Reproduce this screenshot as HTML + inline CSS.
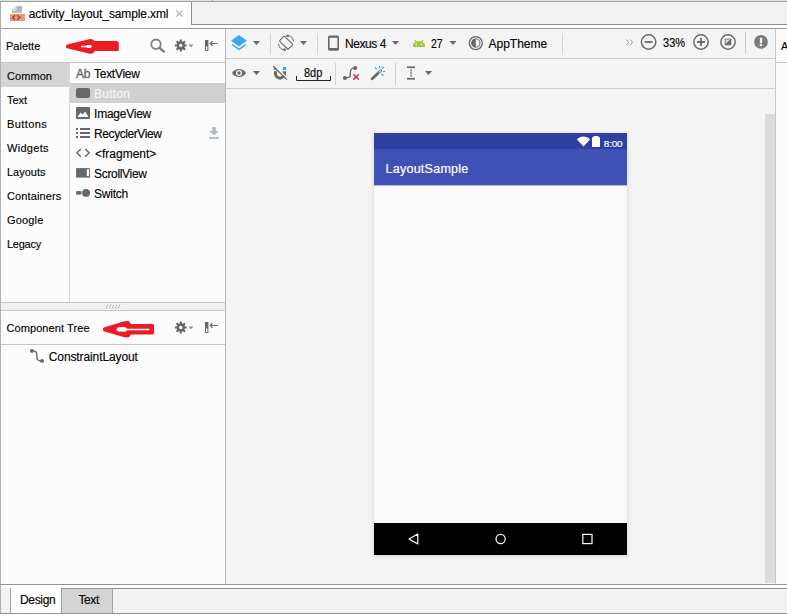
<!DOCTYPE html>
<html><head><meta charset="utf-8">
<style>
*{margin:0;padding:0;box-sizing:border-box}
html,body{width:787px;height:616px;overflow:hidden;background:#fff}
body{position:relative;font-family:"Liberation Sans",sans-serif;color:#111;font-size:12px}
.a{position:absolute}
.t{position:absolute;white-space:nowrap;line-height:1;color:#000;-webkit-text-stroke:0.13px #000}
.it{font-size:12px}
.hd{font-size:11px}
svg{position:absolute;overflow:visible}
</style></head><body>
<!-- ===== top tab strip ===== -->
<div class="a" style="left:0;top:0;width:787px;height:1px;background:#e2e2e2"></div><div class="a" style="left:0;top:1px;width:787px;height:1px;background:#9c9c9c"></div><div class="a" style="left:212px;top:0;width:1px;height:1px;background:#9c9c9c"></div>
<div class="a" style="left:191px;top:2px;width:596px;height:22px;background:#f2f2f2"></div>
<div class="a" style="left:191px;top:24px;width:596px;height:1px;background:#8e8e8e"></div>
<div class="a" style="left:191px;top:2px;width:1px;height:23px;background:#8e8e8e"></div>
<div class="a" style="left:0;top:28px;width:787px;height:1px;background:#9c9c9c"></div>
<div class="a" style="left:0;top:2px;width:1px;height:612px;background:#b0b0b0"></div>
<!-- file icon -->
<svg style="left:10px;top:6px" width="15" height="15" viewBox="0 0 15 15">
<path d="M6.4 0 H12 V6.8 H2 V4.4 H6.4 Z" fill="#b3b8bd"/>
<path d="M2 3.8 L5.8 0 V3.8 Z" fill="#ccd0d4"/>
<rect x="0" y="8" width="15" height="7" fill="#f0956d"/>
<path d="M5 9.3 L2.6 11.5 L5 13.7 M7.4 9.3 L9.8 11.5 L7.4 13.7" stroke="#7a4a36" stroke-width="1.2" fill="none"/>
</svg>
<div class="t it" id="t_tab" style="left:28.7px;top:8px;letter-spacing:-0.115px">activity_layout_sample.xml</div>
<svg style="left:176px;top:10.4px" width="7" height="7" viewBox="0 0 7 7"><path d="M0.3 0.3 L6.7 6.7 M6.7 0.3 L0.3 6.7" stroke="#b2b2b2" stroke-width="1.2" fill="none"/></svg>

<!-- ===== left panel ===== -->
<div class="a" style="left:1px;top:29px;width:224px;height:555px;background:#fcfcfc"></div>
<div class="a" style="left:225px;top:29px;width:1px;height:556px;background:#b8b8b8"></div>
<div class="t hd" id="t_pal" style="left:6px;top:40.5px">Palette</div>
<div class="a" style="left:1px;top:62px;width:224px;height:1px;background:#c8c8c8"></div>
<!-- red arrow 1 -->
<svg style="left:0;top:0" width="230" height="350" viewBox="0 0 230 350">
<path d="M65.8 46.5 C65.8 44.8 67.5 44.4 70 43.8 L86 39.9 L90 39 L92.2 39.2 L94.6 41 L116.8 41 L118.8 42.6 L118.8 50.9 L95 50.9 L92.6 53.4 L90 53.7 L86 52.8 L70 49 C67.5 48.4 65.8 48.2 65.8 46.5 Z" fill="#ed1c24"/>
<path d="M81 45.7 L86 45.7 L87 44.9 L91 44.9 L91.8 46.4 L91 48 L87 48 L86 47.2 L81 47.2 Z" fill="#fff"/>
<path d="M102.8 329.4 C102.8 327.6 104.6 327.2 107 326.5 L123.5 321.6 L127 320.9 L129 321.2 L131 324 L153 324 L154 325 L154 333.5 L153 334.5 L131 334.5 L129 337.3 L127 337.6 L123.5 336.9 L107 332.2 C104.6 331.5 102.8 331.2 102.8 329.4 Z" fill="#ed1c24"/>
<path d="M116.2 329.4 L118 327.3 L125 327.1 L127.2 328.7 L149.2 328.7 L149.2 330.3 L127.2 330.3 L125 331.7 L118 331.5 Z" fill="#fff"/>
</svg>
<!-- header icons: search, gear, hide -->
<svg style="left:150px;top:38px" width="16" height="16" viewBox="0 0 16 16"><circle cx="6" cy="6.2" r="4.7" stroke="#7e7e7e" stroke-width="1.8" fill="none"/><path d="M9.6 9.8 L13.8 13.7" stroke="#7e7e7e" stroke-width="2.4" stroke-linecap="round"/></svg>
<svg class="gear" style="left:174px;top:38.5px" width="22" height="13" viewBox="0 0 22 13">
<g fill="#676767"><circle cx="6.8" cy="6.5" r="4.2"/>
<g stroke="#676767" stroke-width="2.1"><path d="M6.8 0.6 V12.4 M0.9 6.5 H12.7 M2.6 2.3 L11 10.7 M11 2.3 L2.6 10.7"/></g>
<circle cx="6.8" cy="6.5" r="1.7" fill="#fcfcfc"/>
<path d="M14.6 5.6 L19.4 5.6 L17 8.2 Z" fill="#8a8a8a"/></g></svg>
<svg style="left:204.5px;top:40px" width="14" height="11" viewBox="0 0 14 11"><rect x="0.5" y="0.5" width="2.4" height="10" fill="#fcfcfc" stroke="#676767" stroke-width="1"/><rect x="0.5" y="0.5" width="2.4" height="6" fill="#676767"/><path d="M5.2 3.5 H12.6 M7.6 1.2 L5.2 3.5 L7.6 5.8" stroke="#676767" stroke-width="1.1" fill="none"/></svg>

<!-- categories -->
<div class="a" style="left:1px;top:63px;width:68px;height:24px;background:#d4d4d4"></div>
<div class="a" style="left:69px;top:63px;width:1px;height:240px;background:#d9d9d9"></div>
<div class="t hd cat" style="left:7px;top:71px;letter-spacing:0.06px">Common</div>
<div class="t hd cat" style="left:7px;top:95px">Text</div>
<div class="t hd cat" style="left:7px;top:119px;letter-spacing:0.4px">Buttons</div>
<div class="t hd cat" style="left:7px;top:143px;letter-spacing:0.3px">Widgets</div>
<div class="t hd cat" style="left:7px;top:167px">Layouts</div>
<div class="t hd cat" style="left:7px;top:191px;letter-spacing:0.13px">Containers</div>
<div class="t hd cat" style="left:7px;top:215px;letter-spacing:0.17px">Google</div>
<div class="t hd cat" style="left:7px;top:239px;letter-spacing:-0.25px">Legacy</div>

<!-- items -->
<div class="a" style="left:70px;top:83px;width:155px;height:20px;background:#d0d0d0"></div>
<div class="t it pi" style="left:94.1px;top:68px;letter-spacing:-0.3px">TextView</div>
<div class="t it pi" style="left:94.1px;top:88px;color:#f6f6f6;-webkit-text-stroke:0.2px #f6f6f6;letter-spacing:0.25px">Button</div>
<div class="t it pi" style="left:94.1px;top:108px;letter-spacing:-0.25px">ImageView</div>
<div class="t it pi" style="left:94.1px;top:128px;letter-spacing:-0.43px">RecyclerView</div>
<div class="t it pi" style="left:95px;top:148px">&lt;fragment&gt;</div>
<div class="t it pi" style="left:94.1px;top:168px;letter-spacing:-0.33px">ScrollView</div>
<div class="t it pi" style="left:94.1px;top:188px;letter-spacing:-0.23px">Switch</div>
<!-- item icons -->
<div class="t" style="left:76px;top:67.8px;font-size:12px;color:#676767;-webkit-text-stroke:0.35px #676767;letter-spacing:-0.3px">Ab</div>
<div class="a" style="left:76px;top:88px;width:14px;height:10px;border-radius:2px;background:#676767"></div>
<svg style="left:76px;top:107px" width="14" height="12" viewBox="0 0 14 12"><rect width="14" height="12" rx="1.2" fill="#676767"/><path d="M1.5 10 L4.6 5.6 L6.6 7.6 L9.2 4.4 L12.5 10 Z" fill="#fcfcfc"/></svg>
<svg style="left:76px;top:128px" width="14" height="10" viewBox="0 0 14 10"><g fill="#676767"><rect x="0" y="0" width="2" height="2"/><rect x="0" y="4" width="2" height="2"/><rect x="0" y="8" width="2" height="2"/><rect x="4" y="0" width="10" height="2"/><rect x="4" y="4" width="10" height="2"/><rect x="4" y="8" width="10" height="2"/></g></svg>
<svg style="left:76px;top:148px" width="14" height="10" viewBox="0 0 14 10"><path d="M4.9 0.9 L0.8 4.8 L4.9 8.7 M9.1 0.9 L13.2 4.8 L9.1 8.7" stroke="#676767" stroke-width="1.4" fill="none"/></svg>
<svg style="left:76px;top:168px" width="14" height="10" viewBox="0 0 14 10"><rect x="0.1" y="0.1" width="13.8" height="9.5" fill="#676767"/><rect x="10.8" y="1.3" width="2.2" height="6.8" fill="#fcfcfc"/></svg>
<svg style="left:76px;top:188px" width="14" height="10" viewBox="0 0 14 10"><rect x="0.1" y="3.1" width="5.1" height="3.6" rx="1.2" fill="#676767"/><rect x="5" y="3.4" width="1.6" height="3" fill="#b4b4b4"/><circle cx="10.1" cy="4.9" r="3.9" fill="#676767"/></svg>
<!-- download -->
<svg style="left:209px;top:127px" width="10" height="12" viewBox="0 0 10 12"><path d="M3.2 0 H6.8 V4 H10 L5 8.6 L0 4 H3.2 Z" fill="#b2bac2"/><rect x="0" y="10" width="10" height="1.8" fill="#b2bac2"/></svg>

<!-- splitter -->
<div class="a" style="left:1px;top:302px;width:224px;height:1px;background:#c8c8c8"></div>
<div class="a" style="left:1px;top:303px;width:224px;height:7px;background:#f0f0f0"></div>
<div class="a" style="left:1px;top:310px;width:224px;height:1px;background:#c8c8c8"></div>
<svg style="left:105px;top:304px" width="16" height="5" viewBox="0 0 16 5"><path d="M1 4.5 L3 0.5 M4 4.5 L6 0.5 M7 4.5 L9 0.5 M10 4.5 L12 0.5 M13 4.5 L15 0.5" stroke="#b0b0b0" stroke-width="0.9"/></svg>
<!-- component tree -->
<div class="t hd" id="t_ct" style="left:6.4px;top:322.5px;letter-spacing:0.1px">Component Tree</div>
<div class="a" style="left:1px;top:344px;width:224px;height:1px;background:#c8c8c8"></div>
<svg class="gear" style="left:174px;top:321px" width="22" height="13" viewBox="0 0 22 13">
<g fill="#676767"><circle cx="6.8" cy="6.5" r="4.2"/>
<g stroke="#676767" stroke-width="2.1"><path d="M6.8 0.6 V12.4 M0.9 6.5 H12.7 M2.6 2.3 L11 10.7 M11 2.3 L2.6 10.7"/></g>
<circle cx="6.8" cy="6.5" r="1.7" fill="#fcfcfc"/>
<path d="M14.6 5.6 L19.4 5.6 L17 8.2 Z" fill="#8a8a8a"/></g></svg>
<svg style="left:204.5px;top:322px" width="14" height="11" viewBox="0 0 14 11"><rect x="0.5" y="0.5" width="2.4" height="10" fill="#fcfcfc" stroke="#676767" stroke-width="1"/><rect x="0.5" y="0.5" width="2.4" height="6" fill="#676767"/><path d="M5.2 3.5 H12.6 M7.6 1.2 L5.2 3.5 L7.6 5.8" stroke="#676767" stroke-width="1.1" fill="none"/></svg>
<svg style="left:0px;top:0px" width="60" height="370" viewBox="0 0 60 370"><path d="M31.85 350.9 C36.4 350.9 36.9 352.2 36.9 356 C36.9 359.8 37.4 360.9 42.05 360.9" stroke="#676767" stroke-width="1.4" fill="none"/><circle cx="31.85" cy="350.9" r="1.95" fill="#676767"/><circle cx="42.05" cy="360.9" r="1.95" fill="#676767"/></svg>
<div class="t it" id="t_cl" style="left:48.8px;top:351px;letter-spacing:-0.11px">ConstraintLayout</div>

<!-- ===== design area ===== -->
<div class="a" style="left:226px;top:29px;width:550px;height:556px;background:#f4f4f4"></div>
<div class="a" style="left:226px;top:58px;width:550px;height:1px;background:#cdcdcd"></div>
<div class="a" style="left:226px;top:88px;width:550px;height:1px;background:#cdcdcd"></div>
<div class="a" style="left:775px;top:29px;width:1px;height:556px;background:#c8c8c8"></div>
<div class="a" style="left:776px;top:29px;width:11px;height:556px;background:#fcfcfc"></div>
<div class="a" style="left:776px;top:62px;width:11px;height:1px;background:#c8c8c8"></div>
<div class="t hd" style="left:781px;top:41px">A</div>
<div class="a" style="left:765px;top:114px;width:10px;height:469px;background:#dcdcdc"></div>
<!-- toolbar row 1 -->
<svg style="left:226px;top:29px" width="550" height="60" viewBox="226 29 550 60">
<!-- layers -->
<path d="M239 35 L247 40.8 L239 46.6 L231 40.8 Z" fill="#3ba8ee"/>
<path d="M232.2 44.6 L239 49.4 L245.8 44.6" stroke="#3ba8ee" stroke-width="1.5" fill="none"/>
<path d="M253 41 H260 L256.5 45 Z" fill="#676767"/>
<rect x="270" y="33" width="1" height="22" fill="#d0d0d0"/>
<!-- rotate -->
<g stroke="#676767" fill="none"><rect x="280" y="39.2" width="12.2" height="7" rx="1" stroke-width="1.1" transform="rotate(44 286.1 42.7)"/>
<path d="M286.6 35.1 A7.7 7.7 0 0 1 293.7 41.4" stroke-width="1"/><path d="M285.6 50.4 A7.7 7.7 0 0 1 278.5 44" stroke-width="1"/>
<path d="M286.4 35.6 L288.8 36.4" stroke-width="1.7"/><path d="M285.8 49.9 L283.4 49.1" stroke-width="1.7"/></g>
<path d="M300 41 H307 L303.5 45 Z" fill="#676767"/>
<rect x="317" y="33" width="1" height="22" fill="#d0d0d0"/>
<!-- phone icon -->
<rect x="328" y="35.4" width="11" height="15.3" rx="1.6" fill="#676767"/><rect x="329.6" y="37.8" width="7.8" height="10.2" fill="#f4f4f4"/>
<path d="M392 41 H399 L395.5 45 Z" fill="#676767"/>
<!-- android -->
<g fill="#a4c639"><path d="M413 47 V45.8 C413 42.8 415.6 41.2 419 41.2 C422.4 41.2 425 42.8 425 45.8 V47 Z"/><path d="M414.8 39.9 L416.6 42.4 M423.2 39.9 L421.4 42.4" stroke="#a4c639" stroke-width="1.2"/></g>
<circle cx="416.4" cy="44.4" r="0.75" fill="#f4f4f4"/><circle cx="421.6" cy="44.4" r="0.75" fill="#f4f4f4"/>
<path d="M449.5 41 H456.5 L453 45 Z" fill="#676767"/>
<!-- theme -->
<g><circle cx="475.8" cy="43.1" r="6.5" stroke="#676767" stroke-width="1.3" fill="none"/><circle cx="475.8" cy="43.1" r="4.1" stroke="#676767" stroke-width="1" fill="none"/><path d="M475.8 39 A4.1 4.1 0 0 0 475.8 47.2 Z" fill="#676767"/></g>
<rect x="562" y="33" width="1" height="22" fill="#d0d0d0"/>
<!-- >> -->
<path d="M626.2 39.6 L628.6 42.4 L626.2 45.2 M630.2 39.6 L632.6 42.4 L630.2 45.2" stroke="#8a8a8a" stroke-width="0.9" fill="none"/>
<!-- zoom out -->
<g stroke="#6a6a6a" stroke-width="1.5" fill="none"><circle cx="648.6" cy="42" r="7.2"/><path d="M644.6 42 H652.6" stroke-width="1.8"/>
<circle cx="701" cy="42" r="7.2"/><path d="M697 42 H705 M701 38 V46" stroke-width="1.8"/>
<circle cx="728" cy="42" r="7.2"/></g>
<rect x="724.8" y="38.7" width="6.5" height="6.5" fill="#6a6a6a"/><path d="M725.6 39.5 H730.2 L725.6 44.1 Z" fill="#dedede"/>
<rect x="745" y="32" width="1" height="22" fill="#cacaca"/>
<circle cx="761" cy="41.9" r="6.9" fill="#7a7a7a"/><rect x="759.8" y="37.7" width="2.4" height="5.6" rx="0.5" fill="#f4f4f4"/><rect x="759.8" y="44.1" width="2.4" height="2.1" rx="0.5" fill="#f4f4f4"/>
<!-- row 2 -->
<!-- eye -->
<path d="M232 73 C235 67.6 243 67.6 246 73 C243 78.4 235 78.4 232 73 Z" fill="#676767"/><circle cx="239" cy="73" r="3" fill="#f4f4f4"/><circle cx="239" cy="73" r="1.7" fill="#676767"/>
<path d="M253 71 H260 L256.5 75 Z" fill="#676767"/>
<!-- magnet -->
<g fill="none"><path d="M275.45 71.2 V73.6 A4.55 4.55 0 0 0 284.55 73.6 V71.2" stroke="#676767" stroke-width="3"/>
<rect x="273.9" y="67" width="3.1" height="3" fill="#2fa4ee" stroke="none"/><rect x="283.05" y="67" width="3" height="3" fill="#2fa4ee" stroke="none"/>
<path d="M274.2 65.4 L287.8 78.7" stroke="#f4f4f4" stroke-width="1.2"/><path d="M273.2 66.2 L286.9 79.6" stroke="#676767" stroke-width="1.3"/></g>
<!-- 8dp bracket -->
<path d="M296.5 76 V80.5 H330.5 V76" stroke="#222" stroke-width="1" fill="none"/>
<rect x="335" y="63" width="1" height="22" fill="#d0d0d0"/>
<!-- connector w/ x -->
<g><path d="M345 77.9 C351.6 77.9 350 75 350.3 72.6 C350.6 69.6 351 67.9 355.2 67.9" stroke="#676767" stroke-width="1.4" fill="none"/><circle cx="344.9" cy="77.9" r="2" fill="#676767"/><circle cx="355.2" cy="67.9" r="2" fill="#676767"/>
<path d="M353.4 74.2 L358.8 79.6 M358.8 74.2 L353.4 79.6" stroke="#c2385c" stroke-width="1.5"/></g>
<!-- wand -->
<g><path d="M372.2 78.8 L380.8 70.6" stroke="#676767" stroke-width="2.7" stroke-linecap="round"/><path d="M379 72.2 L380.6 70.7" stroke="#f4f4f4" stroke-width="1.1" stroke-linecap="round"/>
<path d="M379.5 65.9 V68 M383.9 66.9 L382.3 68.6 M383 71.5 H385.1 M375 67.5 L376.6 69.2 M381.4 73.9 L383.5 75.8" stroke="#2fa4ee" stroke-width="1.2"/></g>
<rect x="395" y="63" width="1" height="22" fill="#d0d0d0"/>
<!-- I-beam -->
<g fill="#676767"><rect x="407" y="66.4" width="8" height="1.7"/><rect x="407" y="77.9" width="8" height="1.7"/><rect x="410.3" y="69.6" width="1.5" height="1.7"/><rect x="410.3" y="72.2" width="1.5" height="1.7"/><rect x="410.3" y="74.8" width="1.5" height="1.7"/></g>
<path d="M425 71 H432 L428.5 75 Z" fill="#676767"/>
</svg>
<div class="t it" id="t_nex" style="left:345px;top:37.5px;letter-spacing:-0.43px">Nexus 4</div>
<div class="t it" id="t_27" style="left:431px;top:37.5px;transform:scaleX(0.88);transform-origin:0 0">27</div>
<div class="t it" id="t_app" style="left:488.5px;top:37.5px">AppTheme</div>
<div class="t it" id="t_33" style="left:663px;top:36.5px;transform:scaleX(0.92);transform-origin:0 0">33%</div>
<div class="t it" id="t_8dp" style="left:303.5px;top:67px;transform:scaleX(0.91);transform-origin:0 0">8dp</div>

<!-- phone -->
<div class="a" style="left:374px;top:133px;width:253px;height:422px;background:#fafafa;box-shadow:0 1px 5px rgba(0,0,0,0.13)"></div>
<div class="a" style="left:374px;top:133px;width:253px;height:16px;background:#303f9f"></div>
<div class="a" style="left:374px;top:149px;width:253px;height:36px;background:#3f51b5"></div><div class="a" style="left:374px;top:185px;width:253px;height:1px;background:#b4bbe0"></div>
<div class="a" style="left:374px;top:523px;width:253px;height:32px;background:#000"></div>
<div class="t" id="t_ls" style="left:385.5px;top:162.8px;letter-spacing:0.26px;font-size:12.5px;color:#fff;-webkit-text-stroke:0.2px #fff">LayoutSample</div>
<div class="t" id="t_800" style="left:603.8px;top:138.9px;transform:scaleY(0.94);transform-origin:0 85%;letter-spacing:-0.2px;font-size:10px;color:#fff;-webkit-text-stroke:0.2px #fff">8:00</div>
<svg style="left:374px;top:133px" width="253" height="422" viewBox="374 133 253 422">
<path d="M577 139.4 C580.6 135.6 586.4 135.6 590 139.4 L583.5 146.4 Z" fill="#fff"/>
<path d="M593.6 136 H598.4 V137.2 H600 V147 H592 V137.2 H593.6 Z" fill="#fff"/>
<path d="M417.8 534 V544 L409 539 Z" stroke="#fff" stroke-width="1.2" fill="none" stroke-linejoin="round"/>
<circle cx="500.6" cy="539" r="4.6" stroke="#fff" stroke-width="1.2" fill="none"/>
<rect x="582.8" y="534.4" width="9.2" height="9.2" stroke="#fff" stroke-width="1.2" fill="none"/>
</svg>


<!-- ===== bottom ===== -->
<div class="a" style="left:0;top:584px;width:787px;height:1px;background:#949494"></div>
<div class="a" style="left:1px;top:585px;width:786px;height:3px;background:#fff"></div>
<div class="a" style="left:1px;top:588px;width:786px;height:25px;background:#f2f2f2"></div>
<div class="a" style="left:61px;top:588px;width:726px;height:1px;background:#949494"></div>
<div class="a" style="left:0;top:613px;width:787px;height:1px;background:#949494"></div>
<div class="a" style="left:10px;top:588px;width:52px;height:25px;background:#fff;border-left:1px solid #a0a0a0;border-right:1px solid #a0a0a0"></div>
<div class="a" style="left:62px;top:589px;width:51px;height:24px;background:#d4d4d4;border-right:1px solid #a0a0a0"></div>
<div class="t it" id="t_des" style="left:20px;top:593.8px;letter-spacing:-0.33px">Design</div>
<div class="t it" id="t_txt" style="left:78.5px;top:593.8px;letter-spacing:-0.4px">Text</div>
</body></html>
